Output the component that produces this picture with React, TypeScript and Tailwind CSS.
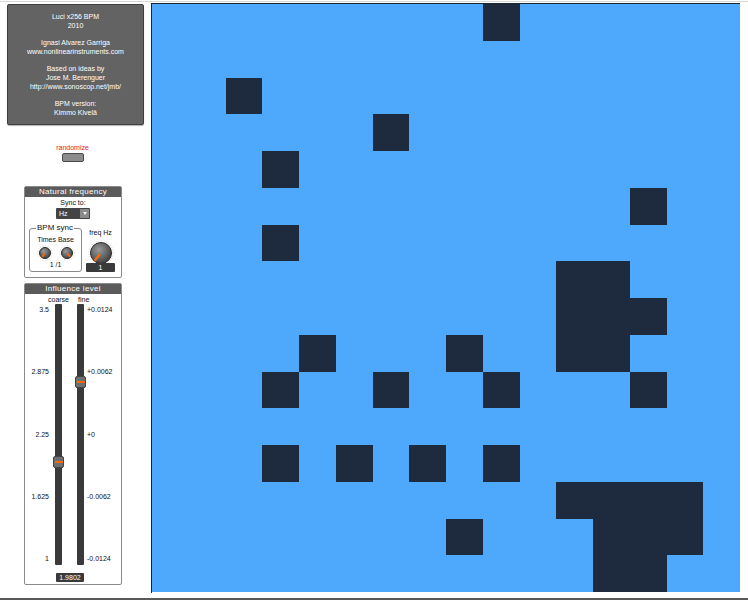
import React from "react";

const font = { fontFamily: '"Liberation Sans", Arial, sans-serif' };

// 16x16 grid, row by row: columns that are lit (dark)
const lit: number[][] = [
  [9],
  [],
  [2],
  [6],
  [3],
  [13],
  [3],
  [11, 12],
  [11, 12, 13],
  [4, 8, 11, 12],
  [3, 6, 9, 13],
  [],
  [3, 5, 7, 9],
  [11, 12, 13, 14],
  [8, 12, 13, 14],
  [12, 13],
];

function Knob({ size, angle }: { size: number; angle: number }) {
  const r = size / 2;
  const rad = (angle * Math.PI) / 180;
  const x2 = r + Math.sin(rad) * (r - 2);
  const y2 = r - Math.cos(rad) * (r - 2);
  const x1 = r + Math.sin(rad) * (r * 0.25);
  const y1 = r - Math.cos(rad) * (r * 0.25);
  const id = `kg${size}${angle}`;
  return (
    <svg width={size + 4} height={size + 4} viewBox={`-2 -2 ${size + 4} ${size + 4}`}>
      <defs>
        <radialGradient id={id} cx="40%" cy="35%" r="70%">
          <stop offset="0%" stopColor="#9a9a9a" />
          <stop offset="100%" stopColor="#3c3c3c" />
        </radialGradient>
      </defs>
      <circle cx={r} cy={r} r={r + 1.2} fill="none" stroke="#cfcfcf" strokeWidth="1" strokeDasharray="1 1.6" />
      <circle cx={r} cy={r} r={r - 0.5} fill={`url(#${id})`} stroke="#2a2a2a" strokeWidth="1" />
      <line x1={x1} y1={y1} x2={x2} y2={y2} stroke="#f06a10" strokeWidth={size > 16 ? 2.4 : 2} strokeLinecap="round" />
    </svg>
  );
}

function Slider({ pos }: { pos: number }) {
  return (
    <div className="relative w-[7px] h-[261px] bg-[#3a3a3a] rounded-[1px]">
      <div
        className="absolute left-[-2px] w-[11px] h-[12px] rounded-[2px] bg-[#6f6f6f] border border-[#444] flex items-center justify-center"
        style={{ top: pos }}
      >
        <div className="w-[8px] h-[2px] bg-[#ff6a00]" />
      </div>
    </div>
  );
}

function PanelHeader({ title }: { title: string }) {
  return (
    <div className="h-[10px] bg-[#5b5b5b] text-white text-[8px] leading-[10px] text-center tracking-[0.3px]">
      {title}
    </div>
  );
}

export default function App() {
  return (
    <div className="w-[748px] h-[600px] bg-white relative overflow-hidden text-[#111]" style={font}>
      <div className="absolute left-0 right-0 top-[1px] h-px bg-[#d8d8d8]" />
      <div className="absolute left-0 right-0 bottom-0 h-[2px] bg-[#5a5a5a]" />
      <div className="flex h-[598px]">
        {/* left controls */}
        <div className="w-[151px] flex flex-col items-start pt-[4px]">
          <div className="ml-[7px] w-[137px] h-[121px] bg-[#636363] border border-[#3f3f3f] rounded-[2px] text-white text-[7px] leading-[9px] text-center pt-[7px] shadow-[0_1px_1px_rgba(0,0,0,0.3)]">
            <div>Luci x256 BPM</div>
            <div>2010</div>
            <div className="h-[8px]" />
            <div>Ignasi Alvarez Garriga</div>
            <div>www.nonlinearinstruments.com</div>
            <div className="h-[8px]" />
            <div>Based on ideas by</div>
            <div>Jose M. Berenguer</div>
            <div>http://www.sonoscop.net/jmb/</div>
            <div className="h-[8px]" />
            <div>BPM version:</div>
            <div>Kimmo Kivelä</div>
          </div>

          <div className="w-[145px] flex flex-col items-center mt-[18px]">
            <div className="text-[#e8202a] text-[7px] leading-[9px]">randomize</div>
            <div className="mt-[1px] w-[22px] h-[9px] rounded-[2px] bg-[#8c8c8c] border border-[#4a4a4a]" />
          </div>

          {/* Natural frequency */}
          <div className="mt-[24px] ml-[24px] w-[98px] h-[92px] border border-[#8a8a8a] rounded-[2px] flex flex-col">
            <PanelHeader title="Natural frequency" />
            <div className="text-[7px] leading-[9px] text-center mt-[1px]">Sync to:</div>
            <div className="ml-[31px] mt-[1px] w-[34px] h-[11px] bg-[#444] rounded-[1px] flex items-center">
              <span className="flex-1 text-white text-[7px] pl-[3px] leading-[11px]">Hz</span>
              <div className="w-[9px] h-[9px] mr-[1px] bg-[#8a8a8a] flex items-center justify-center">
                <div className="w-0 h-0 border-l-[2.5px] border-r-[2.5px] border-t-[3px] border-l-transparent border-r-transparent border-t-[#eee]" />
              </div>
            </div>
            <div className="flex mt-[9px] ml-[4px]">
              <div className="relative w-[53px] h-[44px] border border-[#8a8a8a] rounded-[3px] flex flex-col items-center">
                <div className="absolute top-[-6px] left-[6px] bg-white px-[1px] text-[8px] leading-[10px]">BPM sync</div>
                <div className="text-[7px] leading-[9px] mt-[6px]">Times Base</div>
                <div className="flex gap-[6px] mt-[1px]">
                  <Knob size={12} angle={215} />
                  <Knob size={12} angle={140} />
                </div>
                <div className="text-[7px] leading-[9px] mt-[-1px]">1 /1</div>
              </div>
              <div className="ml-[4px] flex flex-col items-center">
                <div className="text-[7px] leading-[9px] mt-[0px]">freq Hz</div>
                <div className="mt-[3px]">
                  <Knob size={22} angle={220} />
                </div>
                <div className="mt-[-3px] w-[29px] h-[9px] bg-[#3a3a3a] rounded-[1px] text-white text-[7px] leading-[9px] text-center">1</div>
              </div>
            </div>
          </div>

          {/* Influence level */}
          <div className="mt-[5px] ml-[24px] w-[98px] h-[302px] border border-[#8a8a8a] rounded-[2px] flex flex-col">
            <PanelHeader title="Influence level" />
            <div className="flex text-[7px] leading-[9px] mt-[1px]">
              <span className="ml-[23px]">coarse</span>
              <span className="ml-[9px]">fine</span>
            </div>
            <div className="flex mt-[0px]">
              <div className="w-[24px] h-[261px] flex flex-col justify-between items-end text-[7px] leading-[10px] py-[1px]">
                <span>3.5</span>
                <span>2.875</span>
                <span>2.25</span>
                <span>1.625</span>
                <span>1</span>
              </div>
              <div className="ml-[6px]">
                <Slider pos={152} />
              </div>
              <div className="ml-[15px]">
                <Slider pos={72} />
              </div>
              <div className="ml-[3px] h-[261px] flex flex-col justify-between text-[7px] leading-[10px] py-[1px]">
                <span>+0.0124</span>
                <span>+0.0062</span>
                <span>+0</span>
                <span>-0.0062</span>
                <span>-0.0124</span>
              </div>
            </div>
            <div className="ml-[31px] mt-[8px] w-[28px] h-[9px] bg-[#3a3a3a] rounded-[1px] text-white text-[7px] leading-[9px] text-center">
              1.9802
            </div>
          </div>
        </div>

        {/* grid canvas */}
        <div className="mt-[3px] h-[590px] border-l border-t border-[#1b2433]">
          <div className="w-[588px] h-[588px] bg-[#4ea9fc] grid grid-cols-[repeat(16,1fr)] grid-rows-[repeat(16,1fr)]">
            {lit.map((row, r) =>
              Array.from({ length: 16 }, (_, c) => (
                <div key={`${r}-${c}`} className={row.includes(c) ? "bg-[#1e2b3f]" : ""} />
              ))
            )}
          </div>
        </div>
      </div>
    </div>
  );
}
